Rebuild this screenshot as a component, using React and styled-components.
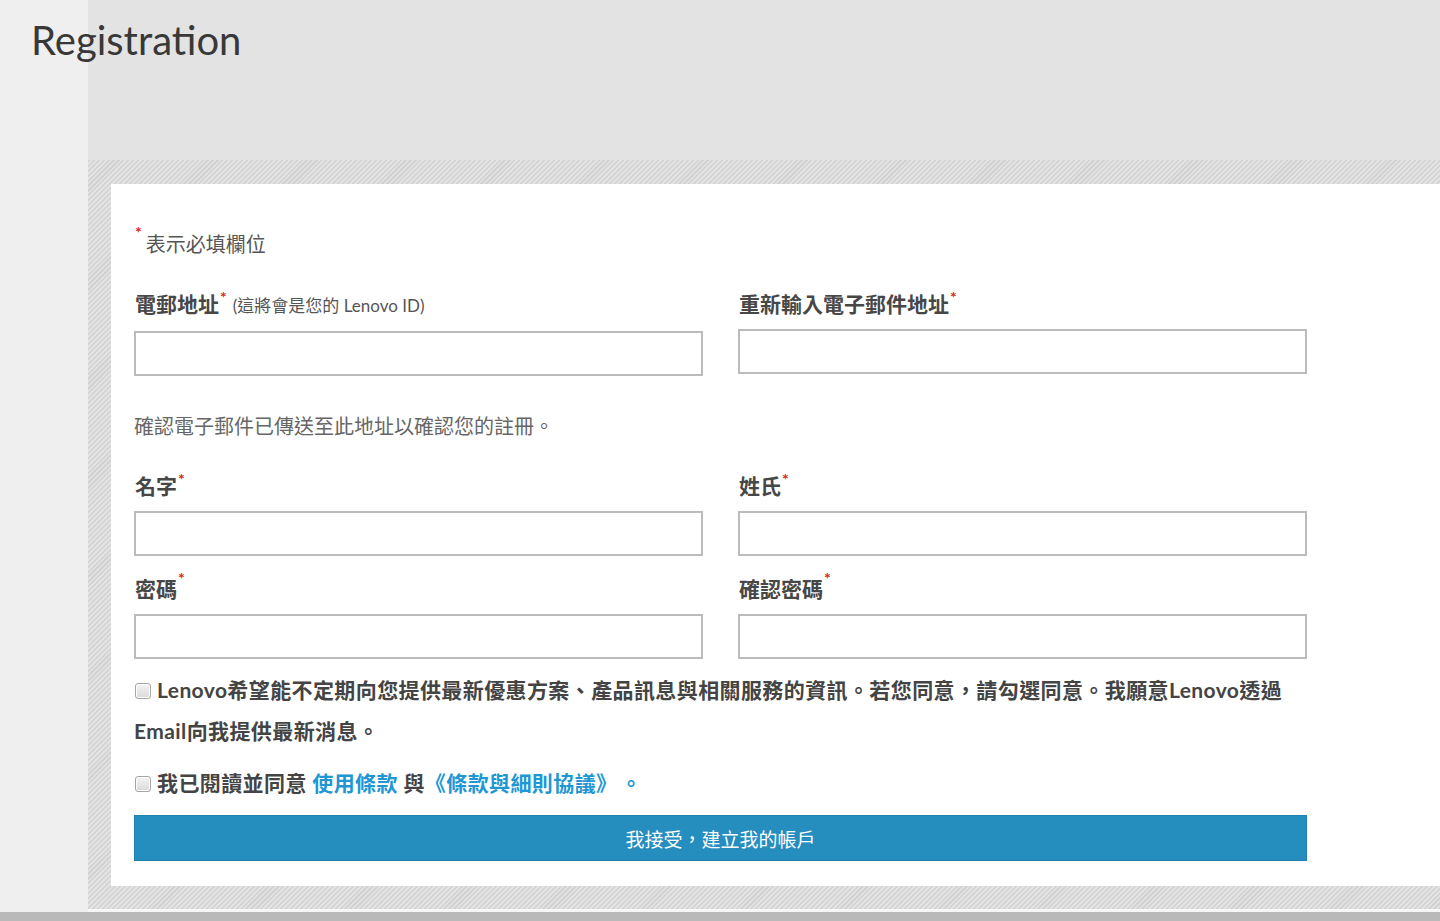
import React from "react";
import styled, { createGlobalStyle } from "styled-components";

const Global = createGlobalStyle`
  html, body { margin: 0; padding: 0; }
  body {
    font-family: Lato, "Noto Sans CJK TC", sans-serif;
    background: #efefef;
    overflow: hidden;
  }
  * { box-sizing: border-box; }
`;

const Shell = styled.div`
  display: grid;
  grid-template-columns: 88px 1fr;
  grid-template-rows: 160px auto 9px;
  width: 1440px;
  height: 921px;
`;

const Sidebar = styled.aside`
  grid-column: 1;
  grid-row: 1 / 3;
  background: #efefef;
`;

const HeaderBg = styled.div`
  grid-column: 2;
  grid-row: 1;
  background: #e3e3e3;
`;

const Title = styled.h1`
  grid-column: 1 / 3;
  grid-row: 1;
  z-index: 1;
  margin: 0;
  padding: 16px 0 0 31px;
  font-family: Lato, sans-serif;
  font-weight: 400;
  font-size: 40px;
  line-height: 48px;
  color: #383838;
`;

const Main = styled.main`
  grid-column: 2;
  grid-row: 2;
  padding: 24px 0 23px 23px;
  border-bottom: 3px solid #f6f6f6;
  background-color: #dcdcdc;
  background-image: repeating-linear-gradient(
    -45deg,
    #d3d3d3 0px,
    #d3d3d3 1.5px,
    #e2e2e2 1.5px,
    #e2e2e2 3.5px
  );
`;

const FooterBar = styled.div`
  grid-column: 1 / 3;
  grid-row: 3;
  background: #b9b9b9;
`;

const Card = styled.section`
  background: #fff;
  height: 702px;
  padding: 48px 0 0 23px;
`;

const Form = styled.form`
  width: 1173px;
  display: flex;
  flex-direction: column;
`;

const Star = styled.sup`
  color: #d9261c;
  font-size: 16px;
  font-weight: 700;
  line-height: 0;
  position: relative;
  top: ${(p) => p.$top || "-1px"};
  margin-left: ${(p) => p.$ml || "1px"};
  margin-right: ${(p) => p.$mr || "0"};
`;

const Note = styled.p`
  margin: 0;
  font-size: 20px;
  line-height: 24px;
  color: #555;
  padding-left: 1px;
`;

const Grid = styled.div`
  display: grid;
  grid-template-columns: 569px 569px;
  column-gap: 35px;
  margin-top: ${(p) => p.$mt};
`;

const Field = styled.div`
  display: flex;
  flex-direction: column;
`;

const Label = styled.label`
  font-size: 21px;
  line-height: 24px;
  font-weight: 700;
  color: #474747;
  margin-bottom: 13px;
  padding-left: 1px;
  white-space: nowrap;
`;

const LabelAside = styled.span`
  font-size: 17px;
  font-weight: 400;
  color: #555;
  margin-left: 6px;
`;

const Input = styled.input`
  height: 45px;
  width: 100%;
  border: 2px solid #bbbbbb;
  border-radius: 0;
  background: #fff;
  font-size: 18px;
  padding: 0 10px;
  outline: none;
`;

const Hint = styled.p`
  margin: 38px 0 0;
  font-size: 20px;
  line-height: 24px;
  color: #666;
`;

const CheckPara = styled.p`
  margin: ${(p) => p.$m};
  font-size: 21px;
  line-height: 41px;
  font-weight: 700;
  letter-spacing: 0.4px;
  color: #444;
`;

const Check = styled.input.attrs({ type: "checkbox" })`
  appearance: none;
  width: 16px;
  height: 16px;
  margin: 0 6px 0 1px;
  vertical-align: -1px;
  border: 1px solid #a5a5a5;
  border-radius: 3px;
  background: linear-gradient(#f4f4f4, #d9d9d9);
  box-shadow: inset 0 0 0 1px #fff;
`;

const Link = styled.a`
  color: #2196d3;
  text-decoration: none;
`;

const Button = styled.button`
  margin-top: 12px;
  height: 46px;
  width: 100%;
  border: 1px solid #1f80b3;
  background: #268dbf;
  color: #fff;
  font-family: "Noto Sans CJK TC", sans-serif;
  font-size: 19px;
  cursor: pointer;
`;

export default function App() {
  return (
    <>
      <Global />
      <Shell>
        <Sidebar />
        <HeaderBg />
        <Title>Registration</Title>
        <Main>
          <Card>
            <Form onSubmit={(e) => e.preventDefault()}>
              <Note>
                <Star $top="-6px" $ml="0" $mr="4px">*</Star>表示必填欄位
              </Note>

              <Grid $mt="36px">
                <Field>
                  <Label>
                    電郵地址<Star>*</Star>
                    <LabelAside>(這將會是您的 Lenovo ID)</LabelAside>
                  </Label>
                  <Input type="email" />
                </Field>
                <Field>
                  <Label>
                    重新輸入電子郵件地址<Star>*</Star>
                  </Label>
                  <Input type="email" />
                </Field>
              </Grid>

              <Hint>確認電子郵件已傳送至此地址以確認您的註冊。</Hint>

              <Grid $mt="36px">
                <Field>
                  <Label>
                    名字<Star>*</Star>
                  </Label>
                  <Input type="text" />
                </Field>
                <Field>
                  <Label>
                    姓氏<Star>*</Star>
                  </Label>
                  <Input type="text" />
                </Field>
              </Grid>

              <Grid $mt="21px">
                <Field>
                  <Label>
                    密碼<Star $top="-5px">*</Star>
                  </Label>
                  <Input type="password" />
                </Field>
                <Field>
                  <Label>
                    確認密碼<Star $top="-5px">*</Star>
                  </Label>
                  <Input type="password" />
                </Field>
              </Grid>

              <CheckPara $m="10px 0 0">
                <Check />
                Lenovo希望能不定期向您提供最新優惠方案、產品訊息與相關服務的資訊。若您同意，請勾選同意。我願意Lenovo透過
                <br />
                Email向我提供最新消息。
              </CheckPara>

              <CheckPara $m="11px 0 0">
                <Check />
                我已閱讀並同意 <Link href="#">使用條款</Link> 與
                <Link href="#">《條款與細則協議》&thinsp;。</Link>
              </CheckPara>

              <Button type="submit">我接受，建立我的帳戶</Button>
            </Form>
          </Card>
        </Main>
        <FooterBar />
      </Shell>
    </>
  );
}
